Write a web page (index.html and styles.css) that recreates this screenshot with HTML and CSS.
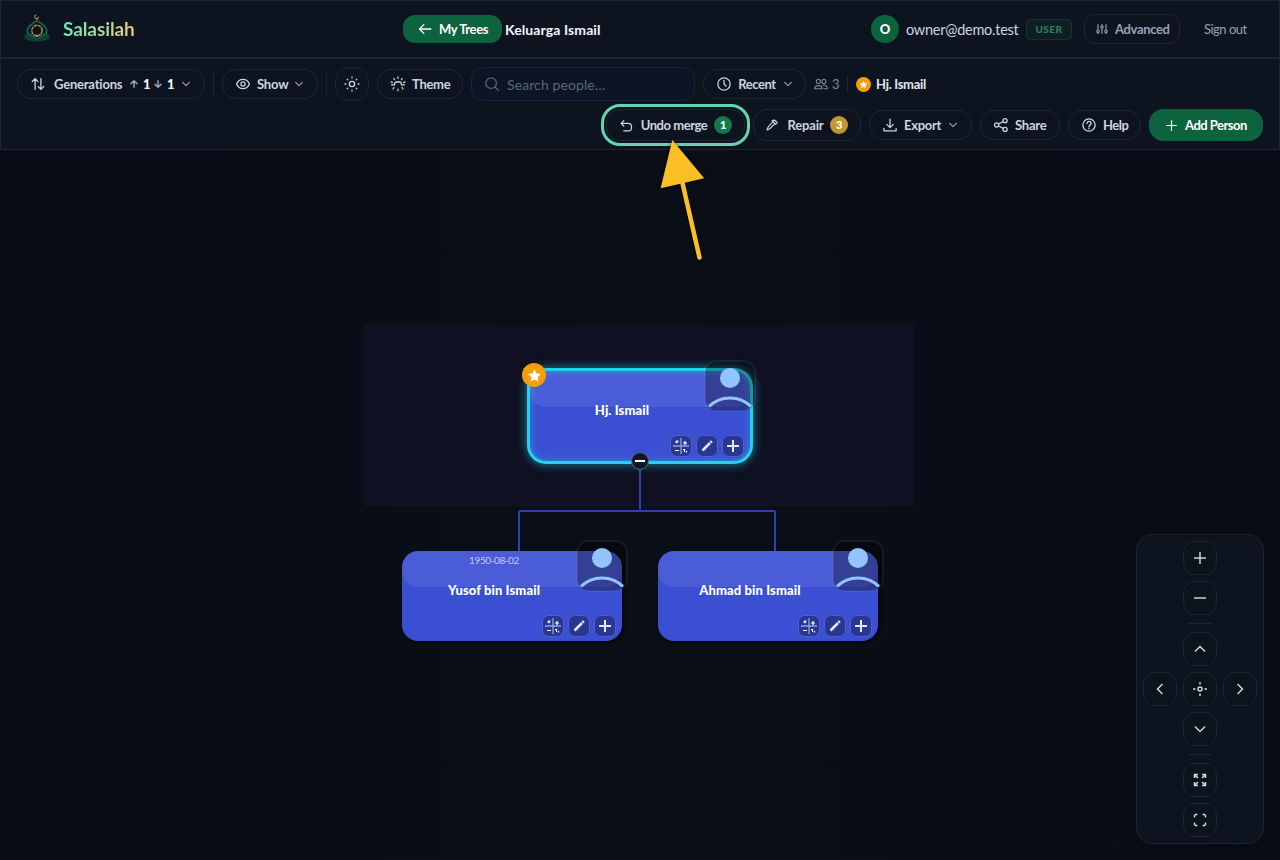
FILE: index.html
```html
<!DOCTYPE html>
<html lang="en">
<head>
    <meta charset="utf-8">
    <title>Salasilah</title>
    <link rel="stylesheet" href="styles.css">
</head>
<body>

<!-- shared icons -->
<svg class="defs" width="0" height="0">
    <symbol id="chevron" viewBox="0 0 24 24"><path d="M4 8l8 8 8-8"/></symbol>
    <symbol id="plus" viewBox="0 0 24 24"><path d="M12 3v18M3 12h18"/></symbol>
    <symbol id="star" viewBox="0 0 24 24"><path d="M12 2l3.1 6.6 7.1.9-5.2 5 1.3 7.2L12 18.2l-6.3 3.5L7 14.500l-5.200-5 7.100-.9z"/></symbol>
    <symbol id="calc" viewBox="0 0 16 16">
        <path d="M8 0v16M0 8h16" stroke="#94a0dc" stroke-width="1.300"/>
        <path d="M2.500 4.500l1-1.500h2M3.500 5l1.500-1M10 5h4M12 3v4M2 12.500h4M10 11.500h1.500v2.500M13.500 13v1.500" stroke="#fff" stroke-width="1.200"/>
    </symbol>
    <symbol id="pencil" viewBox="0 0 16 16"><path d="M3.500 12.500L11 5M11.500 4.500l1.300-1.300" stroke-width="2.600"/></symbol>
    <symbol id="person" viewBox="0 0 50 50">
        <circle cx="25" cy="17" r="10" fill="#93c5fd"/>
        <path d="M4 45.500c11.500-11.500 30.500-11.500 42 0" fill="none" stroke="#93c5fd" stroke-width="3"/>
    </symbol>
</svg>

<header class="header">
    <div class="brand">
        <svg class="logo" viewBox="0 0 32 32">
            <path d="M15.200 1.800a2 2 0 1 0 2.400 2" fill="none" stroke="#a8723c" stroke-width="1.200"/>
            <path d="M16 5v2.500" stroke="#c9a15a" stroke-width="1"/>
            <path d="M16 7.500c2 2.500 9.700 4.300 9.700 10.700 0 2-.7 3.700-1.800 5.300M16 7.500c-2 2.500-9.700 4.300-9.700 10.700 0 2 .7 3.700 1.800 5.300" fill="none" stroke="#11694a" stroke-width="1.700"/>
            <path d="M16 26c-3-4-7-5-11-4l-1.800-.2 1.200 3.200-2 .3c4 2 9 3 13.600 3.200 4.600-.2 9.600-1.200 13.600-3.200l-2-.3 1.200-3.200-1.800.2c-4-1-8 0-11 4z" fill="#0d4a36"/>
            <path d="M16 26.500c-1.500-4-5.500-6-8.500-7 .5 3.500 3.500 6.500 8.500 7zm0 0c1.500-4 5.500-6 8.500-7-.5 3.500-3.500 6.500-8.500 7z" fill="#11573f"/>
            <path d="M3 24.500c5 0 10 1 13 3.500 3-2.500 8-3.500 13-3.500" fill="none" stroke="#092d26" stroke-width=".8"/>
            <circle cx="16" cy="17.500" r="5.200" fill="#0e141f" stroke="#b98d48" stroke-width="1.400" stroke-dasharray="3.400 .7"/>
            <path d="M16 22v2" stroke="#e0b75f" stroke-width="1.500"/>
        </svg>
        <span class="brand-name">Salasilah</span>
    </div>

    <div class="tree-title">
        <a class="btn-back" href="#">
            <svg class="icon" viewBox="0 0 24 24"><path d="M22 12H3M10 4.500L2.500 12l7.500 7.500"/></svg>
            <span>My Trees</span>
        </a>
        <span class="title">Keluarga Ismail</span>
    </div>

    <div class="account">
        <span class="user-avatar">O</span>
        <span class="email">owner@demo.test</span>
        <span class="role">USER</span>
        <a class="btn advanced" href="#">
            <svg class="icon" viewBox="0 0 24 24"><path d="M4 3v11M4 20v1M12 3v2M12 11v10M20 3v11M20 20v1"/><circle cx="4" cy="17" r="2.500"/><circle cx="12" cy="8" r="2.500"/><circle cx="20" cy="17" r="2.500"/></svg>
            <span>Advanced</span>
        </a>
        <a class="signout" href="#">Sign out</a>
    </div>
</header>

<nav class="toolbar">
    <div class="row">
        <button class="btn generations">
            <svg class="icon" viewBox="0 0 24 24"><path d="M7 21V3M2 8l5-5 5 5M17 3v18M12.500 16.500L17 21l5-5"/></svg>
            <span class="label">Generations</span>
            <svg class="icon arrow" viewBox="0 0 24 24"><path d="M12 22V3M3 11l9-8.500 9 8.500"/></svg>
            <b>1</b>
            <svg class="icon arrow" viewBox="0 0 24 24"><path d="M12 2v19M3 13l9 8.500 9-8.500"/></svg>
            <b>1</b>
            <svg class="icon chev"><use href="#chevron"/></svg>
        </button>
        <span class="divider"></span>
        <button class="btn show">
            <svg class="icon" viewBox="0 0 24 24"><path d="M1 12c2-5 6-8 11-8s9 3 11 8c-2 5-6 8-11 8s-9-3-11-8z"/><circle cx="12" cy="12" r="3.500"/></svg>
            <span class="label">Show</span>
            <svg class="icon chev"><use href="#chevron"/></svg>
        </button>
        <span class="divider"></span>
        <button class="btn mode">
            <svg class="icon" viewBox="0 0 24 24"><circle cx="12" cy="12" r="4.500"/><path d="M12 0v1.500M12 22.500V24M0 12h1.500M22.500 12H24M3.700 3.700l1 1M19.300 19.300l1 1M3.700 20.300l1-1M19.300 4.700l1-1"/></svg>
        </button>
        <button class="btn theme">
            <svg class="icon" viewBox="0 0 24 24"><path d="M12 0v2M5 2.500l1 2M19 2.500l-1 2M0 8.500l2.500 1M24 8.500l-2.500 1M6 13c0-6.500 12-6.500 12 0M1 13.500h5M18 13.500h5M5 18l-1.500 2.500M19 18l1.500 2.500M12 21v2.500"/></svg>
            <span class="label">Theme</span>
        </button>
        <label class="search">
            <svg class="icon" viewBox="0 0 24 24"><circle cx="10.500" cy="10.500" r="9"/><path d="M17 17l6 6"/></svg>
            <input type="text" placeholder="Search people…">
        </label>
        <button class="btn recent">
            <svg class="icon" viewBox="0 0 24 24"><circle cx="12" cy="12" r="10.500"/><path d="M12 6v6l3.500 3.500"/></svg>
            <span class="label">Recent</span>
            <svg class="icon chev"><use href="#chevron"/></svg>
        </button>
        <span class="count">
            <svg class="icon" viewBox="0 0 24 24"><circle cx="7.500" cy="7.500" r="3.500"/><circle cx="17" cy="7.500" r="3.500"/><path d="M1 20c0-7 13-7 13 0zM15 14c4-1 8 1 8 6h-6"/></svg>
            <span>3</span>
        </span>
        <span class="divider small"></span>
        <span class="root-person">
            <span class="root-star"><svg viewBox="0 0 24 24"><use href="#star"/></svg></span>
            <span class="root-name">Hj. Ismail</span>
        </span>
    </div>

    <div class="row actions">
        <button class="btn tall undo">
            <svg class="icon" viewBox="0 0 24 24"><path d="M7 3L2 8l5 5M2 8h13c8.500 0 8.500 14 0 14H7"/></svg>
            <span class="label">Undo merge</span>
            <span class="badge">1</span>
        </button>
        <button class="btn tall repair">
            <svg class="icon" viewBox="0 0 24 24"><path d="M2 20l2-5.500L14 4M2 20l5-2L17 8M11 3.500c4-3 9 0 9.500 5M13 5l5 5"/></svg>
            <span class="label">Repair</span>
            <span class="badge gold">3</span>
        </button>
        <button class="btn export">
            <svg class="icon" viewBox="0 0 24 24"><path d="M12 2v14M6.500 11l5.500 5.500 5.500-5.500M1.500 18v4h21v-4"/></svg>
            <span class="label">Export</span>
            <svg class="icon chev"><use href="#chevron"/></svg>
        </button>
        <button class="btn share">
            <svg class="icon" viewBox="0 0 24 24"><circle cx="19" cy="4.500" r="3.500"/><circle cx="4.500" cy="12" r="3.500"/><circle cx="19" cy="19.500" r="3.500"/><path d="M7.700 10.300l8.100-4.200M7.700 13.700l8.100 4.200"/></svg>
            <span class="label">Share</span>
        </button>
        <button class="btn help">
            <svg class="icon" viewBox="0 0 24 24"><circle cx="12" cy="12" r="10.500"/><path d="M8.500 9.500c0-5 7-4.500 7 0 0 3-3.500 2.500-3.500 5.500M12 17.500v1"/></svg>
            <span class="label">Help</span>
        </button>
        <button class="btn tall add">
            <svg class="icon"><use href="#plus"/></svg>
            <span class="label">Add Person</span>
        </button>
    </div>
</nav>

<main class="canvas">
    <div class="generation-band"></div>

    <svg class="links" width="1280" height="710">
        <path d="M640 311v50M519 361h256M519 361v40M775 361v40"/>
    </svg>

    <div class="node root">
        <div class="name">Hj. Ismail</div>
        <svg class="avatar"><use href="#person"/></svg>
        <div class="tools">
            <span><svg><use href="#calc"/></svg></span>
            <span><svg><use href="#pencil"/></svg></span>
            <span><svg class="bold"><use href="#plus"/></svg></span>
        </div>
        <span class="pin"><svg viewBox="0 0 24 24"><use href="#star"/></svg></span>
        <span class="collapse"></span>
    </div>

    <div class="node yusof">
        <div class="date">1950-08-02</div>
        <div class="name">Yusof bin Ismail</div>
        <svg class="avatar"><use href="#person"/></svg>
        <div class="tools">
            <span><svg><use href="#calc"/></svg></span>
            <span><svg><use href="#pencil"/></svg></span>
            <span><svg class="bold"><use href="#plus"/></svg></span>
        </div>
    </div>

    <div class="node ahmad">
        <div class="name">Ahmad bin Ismail</div>
        <svg class="avatar"><use href="#person"/></svg>
        <div class="tools">
            <span><svg><use href="#calc"/></svg></span>
            <span><svg><use href="#pencil"/></svg></span>
            <span><svg class="bold"><use href="#plus"/></svg></span>
        </div>
    </div>

    <div class="controls">
        <button><svg viewBox="0 0 16 16"><path d="M8 2v12M2 8h12"/></svg></button>
        <button><svg viewBox="0 0 16 16"><path d="M2 8h12"/></svg></button>
        <hr>
        <button><svg viewBox="0 0 16 16"><path d="M3 10.500l5-5 5 5"/></svg></button>
        <div class="controls-row">
            <button><svg viewBox="0 0 16 16"><path d="M10.500 3l-5 5 5 5"/></svg></button>
            <button><svg viewBox="0 0 16 16"><circle cx="8" cy="8" r="2"/><path d="M8 1v2.500M8 12.500V15M1 8h2.500M12.500 8H15"/></svg></button>
            <button><svg viewBox="0 0 16 16"><path d="M5.500 3l5 5-5 5"/></svg></button>
        </div>
        <button><svg viewBox="0 0 16 16"><path d="M3 5.500l5 5 5-5"/></svg></button>
        <hr>
        <button><svg viewBox="0 0 16 16"><path d="M2.500 6V2.500H6M2.500 2.500l3.500 3.500M10 2.500h3.500V6M13.500 2.500L10 6M2.500 10v3.500H6M2.500 13.500L6 10M13.500 10v3.500H10M13.500 13.500L10 10"/></svg></button>
        <button><svg viewBox="0 0 16 16"><path d="M2.500 5.500v-2l1-1h2M10.500 2.500h2l1 1v2M13.500 10.500v2l-1 1h-2M5.500 13.500h-2l-1-1v-2"/></svg></button>
    </div>
</main>

<!-- arrow pointing at Undo merge -->
<svg class="pointer" width="60" height="130" viewBox="0 0 60 130">
    <path d="M39.500 122.500L22 46" stroke="#fbbf24" stroke-width="4.500" stroke-linecap="round"/>
    <path d="M12.300 5L44.200 43.300.600 53.200z" fill="#fbbf24"/>
</svg>

</body>
</html>
```
FILE: styles.css
```css
* {
    box-sizing: border-box;
}

body {
    margin: 0;
    width: 1280px;
    height: 860px;
    overflow: hidden;
    display: flex;
    flex-direction: column;
    position: relative;
    background: #0a0d16;
    color: #cbd5e1;
    font-family: Lato, "Open Sans", sans-serif;
    font-size: 13px;
}

a {
    color: inherit;
    text-decoration: none;
}

button, input {
    font: inherit;
    color: inherit;
}

span, b, .name, .date {
    white-space: nowrap;
}

.defs {
    position: absolute;
}

.icon {
    width: 14px;
    height: 14px;
    margin: 0 1px;
    flex: none;
    fill: none;
    stroke: currentColor;
    stroke-width: 2.200;
    stroke-linecap: round;
    stroke-linejoin: round;
    overflow: visible;
}

/* header */
.header {
    height: 58px;
    flex: none;
    display: flex;
    align-items: center;
    justify-content: space-between;
    padding: 0 16px;
    background: #0e141f;
    border: 1px solid #1f2530;
}

.brand {
    width: 117px;
    display: flex;
    align-items: center;
    gap: 10px;
    padding-left: 4px;
}

.logo {
    width: 32px;
    height: 32px;
    flex: none;
}

.brand-name {
    position: relative;
    top: -1px;
    font-size: 19px;
    font-weight: 700;
    letter-spacing: -.1px;
    background: linear-gradient(90deg, #6ee7b7, #e5cb80);
    -webkit-background-clip: text;
    background-clip: text;
    color: transparent;
}

.tree-title {
    width: 199px;
    display: flex;
    align-items: center;
    gap: 3px;
}

.btn-back {
    width: 99px;
    height: 28px;
    flex: none;
    display: flex;
    align-items: center;
    gap: 6px;
    padding-left: 14px;
    border-radius: 12px;
    background: #0d633d;
    color: #fff;
    font-weight: 700;
    letter-spacing: -.4px;
}

.title {
    color: #f1f5f9;
    font-size: 14px;
    font-weight: 700;
    letter-spacing: .1px;
}

.account {
    width: 392px;
    display: flex;
    align-items: center;
}

.user-avatar {
    width: 28px;
    height: 28px;
    display: flex;
    align-items: center;
    justify-content: center;
    border-radius: 50%;
    background: #0d633d;
    color: #fff;
    font-size: 13px;
    font-weight: 900;
}

.email {
    width: 112px;
    margin: 0 8px 0 7px;
    font-size: 14.500px;
    letter-spacing: -.25px;
}

.role {
    width: 46px;
    height: 21px;
    margin-right: 12px;
    border: 1px solid #12332f;
    border-radius: 4px;
    background: #0e1e25;
    color: #2a8157;
    font-size: 10px;
    font-weight: 900;
    line-height: 19px;
    letter-spacing: .5px;
    text-align: center;
}

.signout {
    margin-left: 24px;
    color: #94a3b8;
    letter-spacing: -.5px;
}

/* toolbar */
.toolbar {
    height: 92px;
    flex: none;
    display: flex;
    flex-direction: column;
    gap: 8px;
    padding: 8px 16px;
    background: #0e141f;
    border: 1px solid #1f2530;
}

.row {
    display: flex;
    align-items: center;
    gap: 8px;
    height: 34px;
}

.actions {
    height: 32px;
    justify-content: flex-end;
}

.btn {
    height: 30px;
    flex: none;
    display: flex;
    align-items: center;
    gap: 8px;
    padding: 0 0 0 12px;
    border: 1px solid #1f2530;
    border-radius: 14px;
    background: transparent;
    font-weight: 700;
    letter-spacing: -.2px;
}

.btn .chev {
    width: 10px;
    height: 10px;
    color: #94a3b8;
    stroke-width: 2.800;
}

.btn.tall {
    height: 32px;
}

.advanced {
    width: 96px;
    gap: 7px;
    padding-left: 11px;
    border-radius: 10px;
    color: #94a3b8;
    letter-spacing: -.35px;
}

.advanced .icon {
    width: 12px;
    height: 12px;
    margin: 0;
}

.generations {
    width: 188px;
}

.generations .label {
    width: 68px;
}

.generations .arrow {
    width: 8px;
    height: 8px;
    margin: 0 -3px 0 0;
    color: #94a3b8;
    stroke-width: 4.500;
}

.generations b {
    width: 7px;
    color: #f1f5f9;
}

.generations b + .arrow {
    margin-left: -4px;
}

.generations .chev {
    margin-left: -1px;
}

.show {
    width: 96px;
    gap: 6px;
}

.show .label {
    width: 30px;
}

.divider {
    width: 1px;
    height: 24px;
    background: #1f2530;
}

.divider.small {
    height: 16px;
}

.mode {
    width: 34px;
    height: 34px;
    padding: 0;
    justify-content: center;
}

.theme {
    width: 86px;
    gap: 6px;
    letter-spacing: -.3px;
}

.search {
    width: 224px;
    height: 34px;
    display: flex;
    align-items: center;
    gap: 7px;
    padding-left: 12px;
    border: 1px solid #18243a;
    border-radius: 12px;
    background: #0c1525;
    color: #596579;
}

.search input {
    width: 180px;
    padding: 0;
    border: 0;
    outline: 0;
    background: none;
    font-size: 14px;
    letter-spacing: .1px;
}

.search input::placeholder {
    color: #596579;
}

.recent {
    width: 103px;
    gap: 6px;
}

.recent .label {
    width: 38px;
    letter-spacing: -.4px;
}

.count {
    width: 25px;
    display: flex;
    align-items: center;
    gap: 3px;
    color: #7b899e;
}

.count .icon {
    margin: 0 1px 0 0;
    stroke-width: 1.800;
}

.root-person {
    display: flex;
    align-items: center;
    gap: 5px;
    color: #e2e8f0;
    font-weight: 700;
    letter-spacing: -.3px;
}

.root-star {
    width: 15px;
    height: 15px;
    display: flex;
    align-items: center;
    justify-content: center;
    border-radius: 50%;
    background: #f59e0b;
}

.root-star svg {
    width: 9px;
    height: 9px;
    fill: #fff;
}

.undo {
    width: 139px;
    gap: 6px;
    outline: 3px solid #63d4af;
    outline-offset: 2px;
}

.undo .icon {
    width: 13px;
    height: 13px;
    margin: 0 1px;
}

.undo .label {
    width: 68px;
    letter-spacing: -.45px;
}

.badge {
    width: 18px;
    height: 18px;
    border-radius: 50%;
    background: #147a4b;
    color: #fff;
    font-size: 11px;
    font-weight: 900;
    line-height: 18px;
    text-align: center;
}

.badge.gold {
    background: #c7952f;
}

.repair {
    width: 108px;
    gap: 6px;
    padding-left: 11px;
}

.repair .icon {
    width: 13px;
    height: 13px;
    margin: 0 2px 0 1px;
}

.repair .label {
    width: 37px;
}

.export {
    width: 103px;
    gap: 6px;
}

.export .label {
    width: 37px;
    letter-spacing: -.3px;
}

.share {
    width: 80px;
    gap: 6px;
}

.help {
    width: 73px;
    gap: 6px;
    letter-spacing: -.5px;
}

.add {
    width: 114px;
    gap: 6px;
    padding-left: 14px;
    border-color: #0d633d;
    background: #0d633d;
    color: #fff;
    letter-spacing: -.5px;
}

.add .icon {
    width: 13px;
    height: 13px;
}

/* tree canvas: nodes sit at free positions */
.canvas {
    flex: 1;
    position: relative;
    background: linear-gradient(90deg, #090d17, #0a0e17 50%, #090d17);
}

.generation-band {
    position: absolute;
    left: 365px;
    top: 175px;
    width: 549px;
    height: 181px;
    border: 1px solid #121428;
    background: #0f1122;
}

.links {
    position: absolute;
    left: 0;
    top: 0;
    fill: none;
    stroke: #303fae;
    stroke-width: 2;
}

.node {
    position: absolute;
    width: 220px;
    height: 90px;
    border-radius: 16px;
    background: #3b4fd3;
    box-shadow: 2px 2px 3px rgba(0, 0, 0, .6);
    color: #fff;
}

.node::before {
    content: "";
    position: absolute;
    left: 0;
    top: 0;
    width: 220px;
    height: 36px;
    border-radius: 16px;
    background: rgba(255, 255, 255, .08);
}

.root {
    left: 530px;
    top: 221px;
    box-shadow: 0 0 0 3px #22d3ee, 0 0 10px 4px rgba(34, 211, 238, .5), inset 0 0 10px rgba(34, 211, 238, .45);
}

.yusof {
    left: 402px;
    top: 401px;
}

.ahmad {
    left: 658px;
    top: 401px;
}

.name, .date {
    position: absolute;
    left: 0;
    width: 184px;
    text-align: center;
}

.name {
    top: 30px;
    font-size: 13px;
    font-weight: 900;
    line-height: 18px;
    letter-spacing: .1px;
}

.date {
    top: 3px;
    color: #c5cbf2;
    font-size: 10px;
    line-height: 12px;
    letter-spacing: -.4px;
}

.avatar {
    position: absolute;
    left: 175px;
    top: -10px;
    width: 50px;
    height: 50px;
    border-radius: 12px;
    background: rgba(0, 0, 0, .3);
    box-shadow: 0 0 0 .5px rgba(255, 255, 255, .12), inset 0 0 0 .5px rgba(255, 255, 255, .12);
}

.tools {
    position: absolute;
    right: 6px;
    bottom: 4px;
    display: flex;
    gap: 4px;
}

.tools span {
    width: 22px;
    height: 22px;
    display: flex;
    align-items: center;
    justify-content: center;
    border: 1px solid #5060c4;
    border-radius: 7px;
    background: #293793;
}

.tools svg {
    width: 16px;
    height: 16px;
    fill: none;
    stroke: #e2e8f0;
}

.tools .bold {
    stroke-width: 3;
}

.pin {
    position: absolute;
    left: -8px;
    top: -8px;
    width: 24px;
    height: 24px;
    display: flex;
    align-items: center;
    justify-content: center;
    border-radius: 50%;
    background: #f59e0b;
}

.pin svg {
    width: 15px;
    height: 15px;
    fill: #fff;
}

.collapse {
    position: absolute;
    left: 101px;
    top: 81px;
    width: 18px;
    height: 18px;
    display: flex;
    align-items: center;
    justify-content: center;
    border: 1px solid #5a6878;
    border-radius: 50%;
    background: #0f172a;
}

.collapse::after {
    content: "";
    width: 10px;
    height: 2px;
    background: #fff;
}

/* zoom and pan */
.controls {
    position: absolute;
    right: 16px;
    bottom: 16px;
    width: 128px;
    height: 310px;
    display: flex;
    flex-direction: column;
    align-items: center;
    gap: 6px;
    padding: 6px;
    border: 1px solid #1f2530;
    border-radius: 16px;
    background: #0e141f;
    box-shadow: 0 4px 20px rgba(0, 0, 0, .3);
}

.controls-row {
    display: flex;
    gap: 6px;
}

.controls button {
    width: 34px;
    height: 34px;
    flex: none;
    display: flex;
    align-items: center;
    justify-content: center;
    padding: 0;
    border: 1px solid #1f2530;
    border-radius: 12px;
    background: #0d131d;
}

.controls svg {
    width: 16px;
    height: 16px;
    fill: none;
    stroke: #cbd5e1;
    stroke-width: 1.500;
}

.controls hr {
    width: 24px;
    height: 1px;
    margin: 2px 0;
    border: 0;
    background: #1f2530;
}

.pointer {
    position: absolute;
    left: 660px;
    top: 135px;
    fill: none;
    filter: drop-shadow(0 1px 2px rgba(0, 0, 0, .6));
}
```
